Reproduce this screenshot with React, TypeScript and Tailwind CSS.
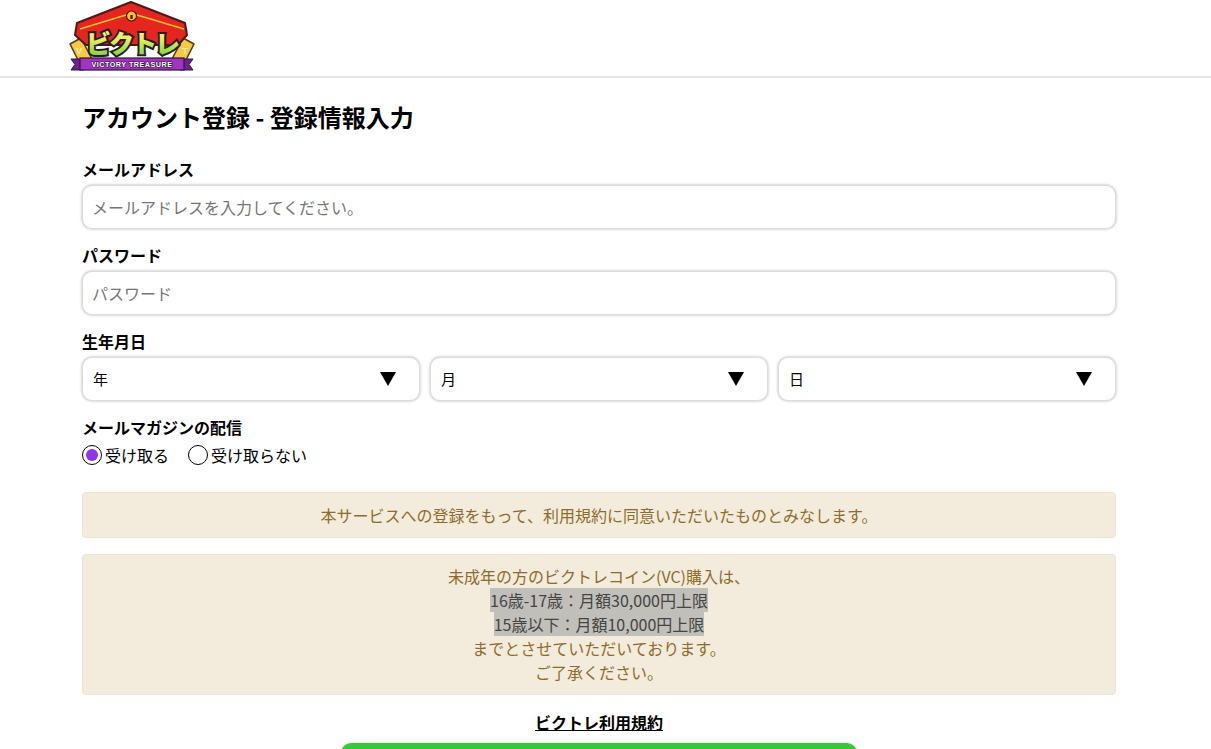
import React from 'react';

const font = { fontFamily: '"Noto Sans CJK JP", "Noto Sans", sans-serif' };

function Logo() {
  return (
    <svg width="128" height="72" viewBox="0 0 128 72" className="block">
      <defs>
        <linearGradient id="letters" x1="0" y1="0" x2="0" y2="1">
          <stop offset="0" stopColor="#fff7a8" />
          <stop offset="0.45" stopColor="#e6ee5a" />
          <stop offset="1" stopColor="#5fd43c" />
        </linearGradient>
      </defs>
      {/* side tickets */}
      <g stroke="#5a3a12" strokeWidth="1.6" strokeLinejoin="round">
        <polygon points="2,43 13,37 24,58 13,65" fill="#f7c948" />
        <polygon points="126,43 115,37 104,58 115,65" fill="#f7c948" />
      </g>
      <text x="11" y="53" textAnchor="middle" fontSize="9" fontWeight="800" fill="#fff0a0" style={{ fontFamily: '"Liberation Sans", sans-serif' }}>V</text>
      <text x="117" y="53" textAnchor="middle" fontSize="9" fontWeight="800" fill="#fff0a0" style={{ fontFamily: '"Liberation Sans", sans-serif' }}>T</text>
      {/* chest lid */}
      <polygon points="9,22 63,1 117,22 119,34 110,44 18,44 7,34" fill="#e5261f" stroke="#4a1a1a" strokeWidth="2" strokeLinejoin="round" />
      <polyline points="12,28 58,14" fill="none" stroke="#f9c22e" strokeWidth="1.6" />
      <polyline points="69,14 116,28" fill="none" stroke="#f9c22e" strokeWidth="1.6" />
      <circle cx="63.5" cy="15" r="5" fill="#f9c22e" stroke="#4a1a1a" strokeWidth="1.2" />
      <rect x="62.3" y="14" width="2.4" height="4" fill="#4a1a1a" />
      {/* title */}
      <text x="64" y="51.5" textAnchor="middle" fontSize="25" fontWeight="900" fill="url(#letters)" stroke="#2a1a2e" strokeWidth="4" paintOrder="stroke" letterSpacing="-2" style={font}>ビクトレ</text>
      {/* ribbon */}
      <polygon points="3,58 16,58 16,69 3,69 7,63.5" fill="#6f1f9c" stroke="#2a1a2e" strokeWidth="1" />
      <polygon points="125,58 112,58 112,69 125,69 121,63.5" fill="#6f1f9c" stroke="#2a1a2e" strokeWidth="1" />
      <rect x="12" y="57" width="104" height="12" fill="#a233c4" stroke="#2a1a2e" strokeWidth="1.2" />
      <text x="64" y="66" textAnchor="middle" fontSize="7.2" fontWeight="800" fill="#fff" stroke="#2a1a2e" strokeWidth="1.2" paintOrder="stroke" letterSpacing="0.5" style={{ fontFamily: '"Liberation Sans", sans-serif' }}>VICTORY TREASURE</text>
    </svg>
  );
}

function TextField({ label, placeholder }: { label: string; placeholder: string }) {
  return (
    <div className="mb-[14px]">
      <label className="block h-[24px] text-[16px] leading-[24px] font-bold text-black">{label}</label>
      <input
        placeholder={placeholder}
        style={font}
        className="mt-[4px] block h-[44px] w-full rounded-[10px] border border-[#dcdcdc] bg-white px-[9px] text-[16px] text-black shadow-[0_0_3px_rgba(0,0,0,0.3)] outline-none placeholder:text-[#757575]"
      />
    </div>
  );
}

function DateSelect({ label }: { label: string }) {
  return (
    <div className="flex h-[44px] flex-1 items-center justify-between rounded-[10px] border border-[#dcdcdc] bg-white pl-[10px] pr-[23px] shadow-[0_0_3px_rgba(0,0,0,0.3)]">
      <span className="text-[15px] text-black">{label}</span>
      <svg width="16" height="14" viewBox="0 0 16 14">
        <polygon points="0,0 16,0 8,14" fill="#000" />
      </svg>
    </div>
  );
}

function Radio({ label, checked }: { label: string; checked?: boolean }) {
  return (
    <div className="flex items-center gap-[3px]">
      <span className="flex h-[20px] w-[20px] items-center justify-center rounded-full border-[1.5px] border-black bg-white">
        {checked && <span className="h-[12px] w-[12px] rounded-full bg-[#9333ea]" />}
      </span>
      <span className="text-[16px] leading-[24px] text-black">{label}</span>
    </div>
  );
}

export default function App() {
  return (
    <div className="h-[749px] overflow-hidden bg-white" style={font}>
      <header className="h-[78px] border-b-2 border-[#e5e5e5] pl-[68px] pt-[1px]">
        <Logo />
      </header>

      <main className="ml-[82px] w-[1034px]">
        <h1 className="mt-[22px] mb-[23px] text-[24px] leading-[34px] font-bold text-black">
          アカウント登録 - 登録情報入力
        </h1>

        <TextField label="メールアドレス" placeholder="メールアドレスを入力してください。" />
        <TextField label="パスワード" placeholder="パスワード" />

        <div className="mb-[14px]">
          <div className="h-[24px] text-[16px] leading-[24px] font-bold text-black">生年月日</div>
          <div className="mt-[4px] flex gap-[10px]">
            <DateSelect label="年" />
            <DateSelect label="月" />
            <DateSelect label="日" />
          </div>
        </div>

        <div className="h-[24px] text-[16px] leading-[24px] font-bold text-black">メールマガジンの配信</div>
        <div className="mt-[4px] flex items-center gap-[19px]">
          <Radio label="受け取る" checked />
          <Radio label="受け取らない" />
        </div>

        <div className="mt-[25px] flex h-[46px] items-center justify-center rounded-[4px] border border-[#ebe4d0] bg-[#f3ecdc] text-[16px] text-[#8f6b2b]">
          本サービスへの登録をもって、利用規約に同意いただいたものとみなします。
        </div>

        <div className="mt-[16px] rounded-[4px] border border-[#ebe4d0] bg-[#f3ecdc] pt-[9px] pb-[10px] text-center text-[16px] leading-[24px] text-[#8f6b2b]">
          未成年の方のビクトレコイン(VC)購入は、
          <br />
          <span className="bg-[#c0bfb9] text-[#444444]">16歳-17歳：月額30,000円上限</span>
          <br />
          <span className="bg-[#c0bfb9] text-[#444444]">15歳以下：月額10,000円上限</span>
          <br />
          までとさせていただいております。
          <br />
          ご了承ください。
        </div>

        <div className="mt-[15px] text-center text-[16px] leading-[24px] font-bold text-black underline">
          ビクトレ利用規約
        </div>

        <div className="mx-auto mt-[9px] h-[48px] w-[516px] rounded-[10px] bg-[#37c63c]" />
      </main>
    </div>
  );
}
